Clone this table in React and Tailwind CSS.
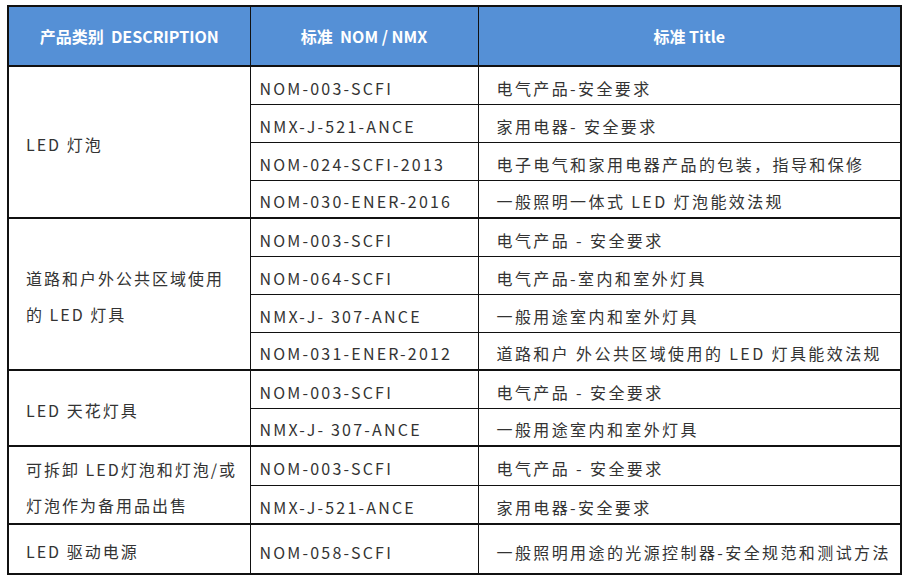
const GROUPS = [
  {
    name: ["LED 灯泡"],
    rows: [
      ["NOM-003-SCFI", "电气产品-安全要求"],
      ["NMX-J-521-ANCE", "家用电器- 安全要求"],
      ["NOM-024-SCFI-2013", "电子电气和家用电器产品的包装，指导和保修"],
      ["NOM-030-ENER-2016", "一般照明一体式 LED 灯泡能效法规"],
    ],
  },
  {
    name: ["道路和户外公共区域使用", "的 LED 灯具"],
    rows: [
      ["NOM-003-SCFI", "电气产品 - 安全要求"],
      ["NOM-064-SCFI", "电气产品-室内和室外灯具"],
      ["NMX-J- 307-ANCE", "一般用途室内和室外灯具"],
      ["NOM-031-ENER-2012", "道路和户 外公共区域使用的 LED 灯具能效法规"],
    ],
  },
  {
    name: ["LED 天花灯具"],
    rows: [
      ["NOM-003-SCFI", "电气产品 - 安全要求"],
      ["NMX-J- 307-ANCE", "一般用途室内和室外灯具"],
    ],
  },
  {
    name: ["可拆卸 LED灯泡和灯泡/或", "灯泡作为备用品出售"],
    rows: [
      ["NOM-003-SCFI", "电气产品 - 安全要求"],
      ["NMX-J-521-ANCE", "家用电器-安全要求"],
    ],
  },
  {
    name: ["LED 驱动电源"],
    rows: [["NOM-058-SCFI", "一般照明用途的光源控制器-安全规范和测试方法"]],
    tall: true,
  },
];

const FONT = { fontFamily: '"Noto Sans CJK SC", "Noto Sans", sans-serif' };

export default function App() {
  return (
    <div className="w-[907px] h-[579px] bg-white pl-[7px] pt-[5px]" style={FONT}>
      <table className="w-[895px] border-collapse border-2 border-[#111111] table-fixed text-[#333333]">
        <colgroup>
          <col className="w-[242px]" />
          <col className="w-[228px]" />
          <col />
        </colgroup>
        <thead>
          <tr className="h-[60px] bg-[#5590d6] text-white text-[16px] font-bold">
            <th className="border border-[#111111] text-center">
              产品类别 &nbsp;DESCRIPTION
            </th>
            <th className="border border-[#111111] text-center">
              标准 &nbsp;NOM / NMX
            </th>
            <th className="border border-[#111111] text-center">标准 Title</th>
          </tr>
        </thead>
        <tbody className="text-[16px] tracking-[2px]">
          {GROUPS.map((g, gi) =>
            g.rows.map((r, ri) => (
              <tr key={gi + "-" + ri} className={g.tall ? "h-[50px]" : "h-[38px]"}>
                {ri === 0 && (
                  <td
                    rowSpan={g.rows.length}
                    className="border border-[#111111] border-t-2 align-middle pl-[17px] pt-[4px] leading-[36px]"
                  >
                    {g.name.map((l, li) => (
                      <div key={li}>{l}</div>
                    ))}
                  </td>
                )}
                <td
                  className={
                    "border border-[#111111] pl-[9px] pt-[5px] leading-none whitespace-nowrap tracking-[2.2px]" +
                    (ri === 0 ? " border-t-2" : "")
                  }
                >
                  {r[0]}
                </td>
                <td
                  className={
                    "border border-[#111111] pl-[18px] pt-[5px] leading-none whitespace-nowrap tracking-[2.4px]" +
                    (ri === 0 ? " border-t-2" : "")
                  }
                >
                  {r[1]}
                </td>
              </tr>
            ))
          )}
        </tbody>
      </table>
    </div>
  );
}
